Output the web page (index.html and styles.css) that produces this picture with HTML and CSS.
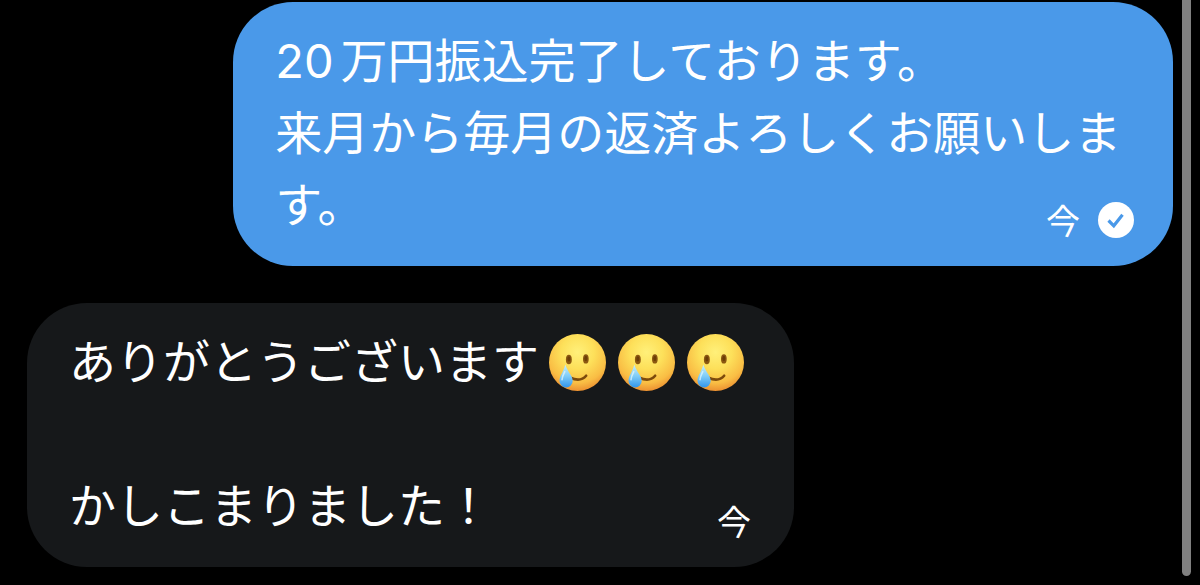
FILE: index.html
```html
<!DOCTYPE html>
<html lang="ja">
<head>
    <meta charset="UTF-8">
    <meta name="viewport" content="width=device-width, initial-scale=1.0">
    <title>メッセージ</title>
    <link rel="stylesheet" href="styles.css">
</head>
<body>
    <!-- Shared emoji drawing -->
    <svg class="defs" width="0" height="0" aria-hidden="true">
        <defs>
            <radialGradient id="face" cx="50%" cy="32%" r="72%">
                <stop offset="0" stop-color="#fff07a"/>
                <stop offset="0.4" stop-color="#fde05a"/>
                <stop offset="0.75" stop-color="#f9bd44"/>
                <stop offset="1" stop-color="#e8842c"/>
            </radialGradient>
            <linearGradient id="tear" x1="0" y1="0" x2="0" y2="1">
                <stop offset="0" stop-color="#c9f0fb"/>
                <stop offset="0.5" stop-color="#80cdf8"/>
                <stop offset="1" stop-color="#3295ea"/>
            </linearGradient>
            <symbol id="smile-tear" viewBox="0 0 56 56">
                <circle cx="28" cy="28" r="28" fill="url(#face)"/>
                <ellipse cx="19.5" cy="25" rx="2.9" ry="4.6" fill="#8a5710"/>
                <ellipse cx="36.2" cy="24.5" rx="2.8" ry="4.6" fill="#8a5710"/>
                <ellipse cx="19.5" cy="24.5" rx="1.5" ry="2.6" fill="#6b3d08"/>
                <ellipse cx="36.2" cy="24" rx="1.5" ry="2.6" fill="#6b3d08"/>
                <path d="M21 43 Q31 47.5 36.5 41" fill="none" stroke="#7c4a0c" stroke-width="2.6" stroke-linecap="round"/>
                <path d="M16 30 C18 37 23.3 41 23.3 46 A6.5 6.5 0 0 1 10.3 46 C10.3 41 14.5 37 16 30 Z" fill="url(#tear)"/>
                <path d="M15.5 37 C14 40 12.8 42 12.8 45" fill="none" stroke="#e4f8ff" stroke-width="1.6" stroke-linecap="round" opacity="0.7"/>
            </symbol>
        </defs>
    </svg>

    <main class="thread">
        <article class="bubble sent">
            <p class="text"><span class="number">20</span>万円振込完了しております。<br>来月から毎月の返済よろしくお願いします。</p>
            <div class="meta">
                <time>今</time>
                <svg class="check" viewBox="0 0 36 36" role="img" aria-label="送信済み">
                    <circle cx="18" cy="18" r="18" fill="#fff"/>
                    <path d="M10.5 18.5 L15.8 23.8 L24.5 12.8" fill="none" stroke="#4a99e9" stroke-width="3.2"/>
                </svg>
            </div>
        </article>

        <article class="bubble received">
            <p class="text">ありがとうございます<span class="emojis" role="img" aria-label="涙を流す笑顔"><svg class="emoji"><use href="#smile-tear"/></svg><svg class="emoji"><use href="#smile-tear"/></svg><svg class="emoji"><use href="#smile-tear"/></svg></span><br><br>かしこまりました！</p>
            <div class="meta">
                <time>今</time>
            </div>
        </article>
    </main>

    <div class="scrollbar"></div>
</body>
</html>
```

FILE: styles.css
```css
* {
    margin: 0;
    padding: 0;
    box-sizing: border-box;
}

body {
    background: #000;
    color: #fff;
    font-family: "Noto Sans CJK JP", sans-serif;
    font-size: 47px;
    line-height: 72px;
}

.defs {
    position: absolute;
}

.thread {
    display: flex;
    flex-direction: column;
    gap: 37px;
    padding: 2px 27px 18px;
}

/* Bubbles: text and meta share one grid cell */
.bubble {
    display: grid;
    max-width: 82%;
    padding: 20px 43px 28px 42px;
    border-radius: 60px;
}

.bubble > * {
    grid-area: 1 / 1;
}

.sent {
    align-self: flex-end;
    background: #4a99e9;
}

.received {
    align-self: flex-start;
    background: #16181a;
}

.number {
    margin-right: 7px;
    font-family: Inter, sans-serif;
    line-height: 1;
}

.meta {
    display: flex;
    align-items: center;
    align-self: end;
    justify-self: end;
    gap: 18px;
    font-size: 34px;
    line-height: 36px;
}

.sent .meta {
    margin-right: -4px;
}

.check {
    width: 36px;
    height: 36px;
}

.emojis {
    display: inline-flex;
    gap: 12px;
    margin: 0 7px 0 10px;
    vertical-align: -12px;
}

.emoji {
    width: 57px;
    height: 57px;
}

/* Scroll indicator */
.scrollbar {
    position: fixed;
    top: 0;
    right: 9px;
    bottom: 9px;
    width: 9px;
    border-radius: 0 0 5px 5px;
    background: #808080;
}
```
